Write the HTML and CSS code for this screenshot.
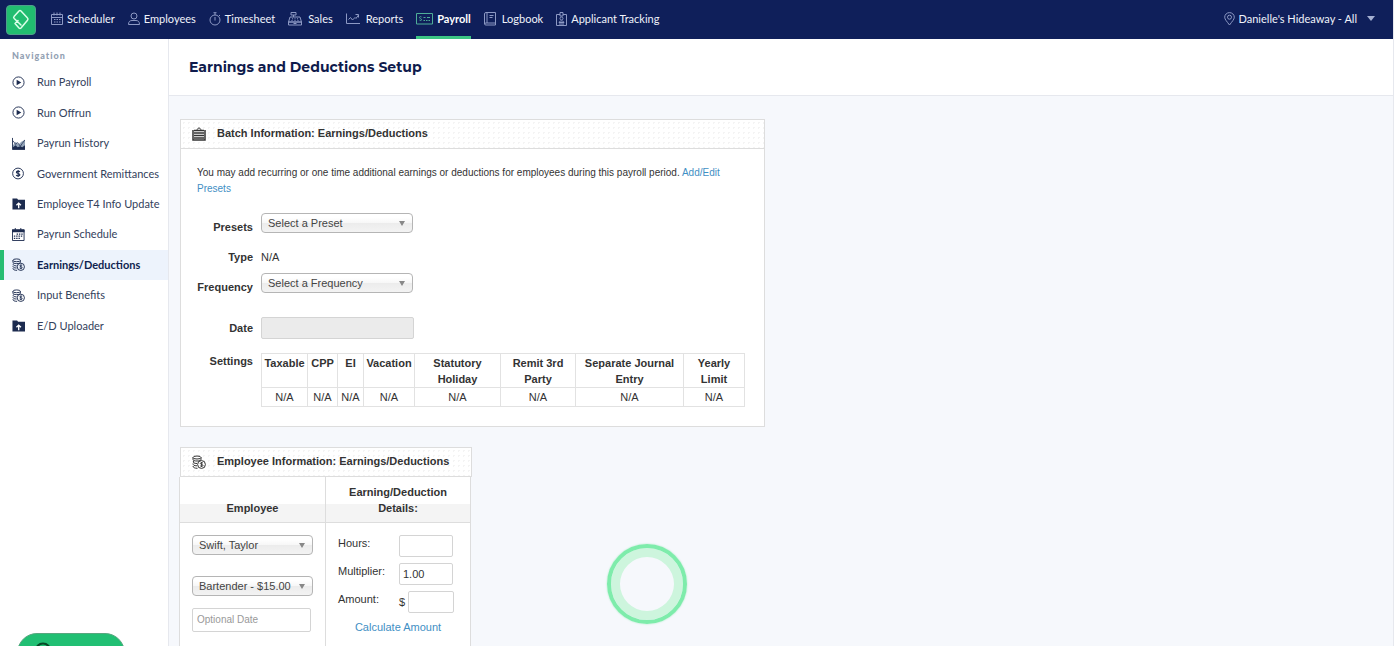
FILE: index.html
```html
<!doctype html>
<html lang="en">

<head>
    <meta charset="utf-8">
    <title>Earnings and Deductions Setup</title>
    <link rel="stylesheet" href="styles.css">
</head>

<body>
    <!-- shared icons -->
    <svg class="defs" width="0" height="0">
        <symbol id="play" viewBox="0 0 14 14">
            <circle cx="7" cy="7" r="6" fill="none" stroke="currentColor"/>
            <path d="M5 4l5 3-5 3z" fill="currentColor"/>
        </symbol>
        <symbol id="coins" viewBox="0 0 14 14">
            <g fill="none" stroke="currentColor">
                <ellipse cx="5" cy="2.500" rx="4" ry="1.500"/>
                <path d="M1 2.500v2c0 1 1.500 1.500 4 1.500s4-.5 4-1.500v-2M1.500 6c-.8 1.500.5 2.500 3.500 2.500M1 8.500c0 1.500 1 2.300 4 2.300M1 11c0 1.500 1.500 2.300 4.500 2.300"/>
                <circle cx="9.500" cy="9.500" r="3.900"/>
                <path d="M11 8.200c-.5-.8-2.700-.8-2.700.3s2.700.7 2.700 1.900-2.300 1.200-2.900.3M9.600 7v5" stroke-width=".9"/>
            </g>
        </symbol>
        <symbol id="folder" viewBox="0 0 14 14">
            <path d="M.5 1.500h5l1 1.500H14v10.500H.5z" fill="currentColor"/>
            <path d="M7.200 12V7.500M4.800 9l2.400-2.400L9.600 9" fill="none" stroke="#fff" stroke-width="1.500"/>
        </symbol>
    </svg>

    <header class="topbar">
        <a href="#" class="logo" aria-label="Home">
            <svg width="30" height="30" viewBox="0 0 30 30" fill="none" stroke-width="1.500" stroke-linejoin="round" stroke-linecap="round">
                <path d="M8 11.500l5-5.500q1-1 2 0l6.500 7q1 1 0 2.200l-6.500 7.800q-1 1-2 0l-4-4.500 3-3M8 11.500q-.8 1 .2 2l6.800 6.500"/>
            </svg>
        </a>
        <nav class="menu">
            <a href="#"><svg width="12" height="14" viewBox="0 0 12 14"><path d="M.5 2.500h11v10H.5zM.5 5.500h11M3 .5v3M6 .5v3M9 .5v3M3 7.500h1.500M5.500 7.500H7M8 7.500h1.500M3 10h1.500M5.500 10H7M8 10h1.500"/></svg>Scheduler</a>
            <a href="#"><svg width="12" height="14" viewBox="0 0 12 14"><circle cx="6" cy="4" r="3"/><path d="M.5 12.500c0-3 1.500-4 3.500-4h4c2 0 3.500 1 3.500 4z"/></svg>Employees</a>
            <a href="#"><svg width="12" height="14" viewBox="0 0 12 14"><circle cx="6" cy="8" r="5"/><path d="M4.500.7h3M6 1v2M6 5v3.500M10 3l1 1"/></svg>Timesheet</a>
            <a href="#" class="wide"><svg width="14" height="14" viewBox="0 0 14 14"><path d="M3 .5h5v2.500H3zM5.500 3v2M2 5h10l1.500 5H.5zM.5 10h13v3H.5zM4 6.800h1M6.500 6.800h1M9 6.800h1M3.500 8.500h1M6.500 8.500h1M9.500 8.500h1M5.500 11.500h3"/></svg>Sales</a>
            <a href="#" class="wide"><svg width="14" height="14" viewBox="0 0 14 14"><path d="M.5 1.500v10H14M2.500 7.500l2-2 2 2.500L9 5.500l1 1 2.500-3.500M9.500 2.500h3V5.500"/></svg>Reports</a>
            <a href="#" class="current"><svg width="17" height="14" viewBox="0 0 17 14"><path d="M.5 1.500h16v10.500H.5zM5.500 5c-1-.7-2-.3-2 .5 0 1.200 2 1 2 2.200 0 1-1.300 1-2 .4M7.500 5.500h2M11 5.500h3M7.500 8.500h1.500M10 8.500h1.500M12.500 8.500h1.500"/></svg>Payroll</a>
            <a href="#" class="wide"><svg width="12" height="14" viewBox="0 0 12 14"><path d="M2 .5h9.500v10.500H2q-1.500 0-1.500 1t1.500 1h9.500v-2M.5 12V2q0-1.500 1.500-1.500M3 .5V11M5.500 3.500H9.500M5.500 5.500h3"/></svg>Logbook</a>
            <a href="#"><svg width="11" height="14" viewBox="0 0 11 14"><path d="M4 2.500H.5v11h10v-11H7M4 .5h3v3.500H4z"/><circle cx="5.500" cy="6.500" r="1.500"/><path d="M3 10.500c0-2 5-2 5 0zM3 12h5"/></svg>Applicant Tracking</a>
        </nav>
        <button type="button" class="location">
            <svg width="11" height="14" viewBox="0 0 11 14"><path d="M5.500 13C3 9.500.7 7.500.7 5.200a4.800 4.600 0 0 1 9.600 0C10.300 7.500 8 9.500 5.500 13z"/><circle cx="5.500" cy="5.200" r="2"/></svg>
            Danielle's Hideaway - All
            <span class="caret"></span>
        </button>
    </header>

    <div class="layout">
        <aside class="sidebar">
            <div class="heading">Navigation</div>
            <nav class="links">
                <a href="#"><svg><use href="#play"/></svg>Run Payroll</a>
                <a href="#"><svg><use href="#play"/></svg>Run Offrun</a>
                <a href="#"><svg viewBox="0 0 14 14"><path d="M1 9l3-4 3 3 3-3 4-2v10H1z" fill="#93a4b8"/><path d="M.5 1v12.500H14" fill="none" stroke="currentColor"/><path d="M1 4l3 4 2-2 3 4 2-3 3-4" fill="none" stroke="currentColor" stroke-width=".8"/><path d="M1 13v-2l3-2 2 2 3-1 2 1 3-2v4z" fill="currentColor"/></svg>Payrun History</a>
                <a href="#"><svg viewBox="0 0 14 14"><circle cx="6.500" cy="7" r="5.800" fill="none" stroke="currentColor"/><path d="M8.500 5.300c-.7-1.200-3.800-1.200-3.800.4s3.800 1 3.800 2.700-3.200 1.600-4 .3M6.600 3.300v7.400" fill="none" stroke="currentColor" stroke-width="1.200"/></svg>Government Remittances</a>
                <a href="#"><svg><use href="#folder"/></svg>Employee T4 Info Update</a>
                <a href="#"><svg viewBox="0 0 14 14"><path d="M.5 2h12.500v11.500H.5z" fill="none" stroke="currentColor"/><path d="M0 1.500h13.500V4.500H0zM3 0h1v2H3zM9 0h1v2H9z" fill="currentColor"/><path d="M5 6.500h6.500M2 8.800h9.500M2 11.200h7" fill="none" stroke="currentColor" stroke-width="1.400" stroke-dasharray="1.500 1"/></svg>Payrun Schedule</a>
                <a href="#" class="current"><svg><use href="#coins"/></svg>Earnings/Deductions</a>
                <a href="#"><svg><use href="#coins"/></svg>Input Benefits</a>
                <a href="#"><svg><use href="#folder"/></svg>E/D Uploader</a>
            </nav>
        </aside>

        <main class="main">
            <h1>Earnings and Deductions Setup</h1>

            <section class="panel batch">
                <h2>
                    <svg viewBox="0 0 14 14"><path d="M1 3v10h12V3" fill="none" stroke="currentColor" stroke-width="1.500"/><path d="M2 3.500h10M2 6h10M2 8.500h10M2 11h10" stroke="currentColor" stroke-width="1.500"/><path d="M4.500 3L7 .7 9.500 3" fill="none" stroke="currentColor"/></svg>
                    <span>Batch Information: Earnings/Deductions</span>
                </h2>
                <form class="body">
                    <p>You may add recurring or one time additional earnings or deductions for employees during this payroll period. <a href="#">Add/Edit Presets</a></p>
                    <div class="row">
                        <label for="preset">Presets</label>
                        <div class="select">
                            <select id="preset"><option>Select a Preset</option></select>
                        </div>
                    </div>
                    <div class="row">
                        <span class="label">Type</span>
                        <span class="value">N/A</span>
                    </div>
                    <div class="row tall">
                        <label for="frequency">Frequency</label>
                        <div class="select">
                            <select id="frequency"><option>Select a Frequency</option></select>
                        </div>
                    </div>
                    <div class="row date">
                        <label for="date">Date</label>
                        <input type="text" id="date" disabled="disabled">
                    </div>
                    <div class="row settings">
                        <span class="label">Settings</span>
                        <table>
                            <thead>
                                <tr>
                                    <th class="taxable">Taxable</th>
                                    <th class="cpp">CPP</th>
                                    <th class="ei">EI</th>
                                    <th class="vacation">Vacation</th>
                                    <th class="holiday">Statutory Holiday</th>
                                    <th class="remit">Remit 3rd Party</th>
                                    <th class="journal">Separate Journal Entry</th>
                                    <th>Yearly Limit</th>
                                </tr>
                            </thead>
                            <tbody>
                                <tr>
                                    <td>N/A</td>
                                    <td>N/A</td>
                                    <td>N/A</td>
                                    <td>N/A</td>
                                    <td>N/A</td>
                                    <td>N/A</td>
                                    <td>N/A</td>
                                    <td>N/A</td>
                                </tr>
                            </tbody>
                        </table>
                    </div>
                </form>
            </section>

            <section class="panel employee">
                <h2>
                    <svg><use href="#coins"/></svg>
                    <span>Employee Information: Earnings/Deductions</span>
                </h2>
                <table>
                    <thead>
                        <tr>
                            <th class="name">Employee</th>
                            <th>Earning/Deduction Details:</th>
                        </tr>
                    </thead>
                    <tbody>
                        <tr>
                            <td>
                                <div class="who">
                                    <div class="select">
                                        <select aria-label="Employee"><option>Swift, Taylor</option></select>
                                    </div>
                                    <div class="select">
                                        <select aria-label="Position"><option>Bartender - $15.00</option></select>
                                    </div>
                                    <input type="text" placeholder="Optional Date" aria-label="Optional Date">
                                </div>
                            </td>
                            <td>
                                <div class="details">
                                    <div class="line">
                                        <label for="hours">Hours:</label>
                                        <input type="text" id="hours">
                                    </div>
                                    <div class="line">
                                        <label for="multiplier">Multiplier:</label>
                                        <input type="text" id="multiplier" value="1.00">
                                    </div>
                                    <div class="line amount">
                                        <label for="amount">Amount:</label>
                                        <span>$</span>
                                        <input type="text" id="amount">
                                    </div>
                                    <a href="#">Calculate Amount</a>
                                </div>
                            </td>
                        </tr>
                    </tbody>
                </table>
            </section>
        </main>
    </div>

    <div class="spinner" role="status" aria-label="Loading"></div>
    <button type="button" class="help" aria-label="Help">
        <svg width="18" height="18" viewBox="0 0 18 18"><circle cx="9" cy="9" r="7.500" fill="none" stroke="#064a26" stroke-width="2"/></svg>
    </button>
</body>

</html>
```
FILE: styles.css
```css
* {
    box-sizing: border-box;
}

body {
    margin: 0;
    height: 100vh;
    overflow: hidden;
    display: flex;
    flex-direction: column;
    border-right: 1px solid #e6e8ee;
    font-family: "Liberation Sans", Arial, sans-serif;
    font-size: 11px;
    line-height: 16px;
    color: #333333;
    background: #f6f8fc;
}

a {
    color: #3f8fc4;
    text-decoration: none;
}

input,
select,
button {
    font: inherit;
    color: inherit;
}

.defs {
    position: absolute;
}

/* top bar */

.topbar {
    flex: none;
    display: flex;
    align-items: center;
    height: 39px;
    padding: 0 18px 0 6px;
    background: #0f1f5a;
    font-family: Lato, sans-serif;
    color: #f0f3fb;
}

.topbar svg {
    fill: none;
    stroke: #8d99c4;
}

.logo {
    width: 30px;
    height: 30px;
    border-radius: 4px;
    background: #21bd70;
    border: 1px solid #4f9f8b;
    margin-right: 15px;
}

.topbar .logo svg {
    display: block;
    margin: -1px;
    stroke: #dcffe9;
}

.menu {
    display: flex;
    align-self: stretch;
    gap: 13px;
    flex: 1;
}

.menu a {
    display: flex;
    align-items: center;
    gap: 4px;
    color: inherit;
    white-space: nowrap;
    border-bottom: 3px solid transparent;
    border-top: 1px solid transparent;
}

.menu a.wide {
    gap: 6px;
}

.menu a.current {
    font-weight: 700;
    color: #ffffff;
    border-bottom-color: #3cc684;
}

.menu a.current svg {
    stroke: #4eae98;
}

.location {
    display: flex;
    align-items: center;
    gap: 4px;
    padding: 0 0 2px;
    border: none;
    background: none;
    cursor: pointer;
}

.caret {
    margin-left: 6px;
    border: 4px solid transparent;
    border-top: 5px solid #a5b0d2;
    border-bottom: none;
}

.layout {
    flex: 1;
    display: flex;
    min-height: 0;
}

/* sidebar */

.sidebar {
    flex: none;
    width: 169px;
    border-right: 1px solid #e6e8ee;
    background: #ffffff;
    font-family: Lato, sans-serif;
}

.heading {
    padding: 9px 12px 3px;
    font-size: 9px;
    font-weight: 900;
    letter-spacing: 1px;
    color: #93a1b3;
}

.links {
    display: grid;
    grid-auto-rows: 1fr;
    height: 274px;
}

.links a {
    display: flex;
    align-items: center;
    gap: 12px;
    padding-left: 8px;
    border-left: 4px solid transparent;
    color: #33415c;
    white-space: nowrap;
}

.links svg {
    width: 13px;
    height: 13px;
    color: #1c2b4f;
}

.links a.current {
    font-weight: 700;
    color: #0f1f4f;
    background: #edf3fc;
    border-left-color: #27bd72;
}

/* content */

.main {
    flex: 1;
    min-width: 0;
}

h1 {
    margin: 0;
    height: 57px;
    padding: 0 20px;
    border-bottom: 1px solid #e6e8ee;
    background: #ffffff;
    font-family: Montserrat, Inter, sans-serif;
    font-size: 14px;
    font-weight: 700;
    line-height: 56px;
    color: #0f1b4c;
}

.panel {
    margin-left: 11px;
}

.panel h2 {
    display: flex;
    align-items: center;
    gap: 11px;
    margin: 0;
    height: 29px;
    padding: 0 11px;
    border-bottom: 1px solid #dddddd;
    background: #ffffff radial-gradient(#f4f4f4 1px, transparent 1px) 0 0 / 5px 5px;
    font-size: 11px;
    font-weight: 700;
}

.panel h2 svg {
    width: 14px;
    height: 14px;
}

.panel h2 span {
    padding-bottom: 2px;
}

.batch {
    max-width: 585px;
    margin-top: 23px;
    border: 1px solid #dddddd;
    background: #ffffff;
}

.body {
    padding: 16px 16px 19px;
}

.body p {
    margin: 0 0 16px;
    font-size: 10px;
}

.row {
    display: flex;
    align-items: flex-start;
    gap: 8px;
    height: 30px;
}

.row.tall {
    height: 44px;
}

.row.date {
    height: 36px;
}

.row.settings {
    height: auto;
}

.row label,
.row .label {
    flex: none;
    width: 56px;
    padding-top: 6px;
    text-align: right;
    font-weight: 700;
}

.value {
    padding-top: 6px;
}

.row.date label {
    padding-top: 3px;
}

.row.settings .label {
    padding-top: 0;
}

.select {
    position: relative;
    width: 152px;
}

.select::after {
    content: "";
    position: absolute;
    right: 8px;
    top: 8px;
    border: 3px solid transparent;
    border-top: 5px solid #888888;
    border-bottom: none;
    pointer-events: none;
}

select {
    display: block;
    appearance: none;
    width: 100%;
    height: 20px;
    padding: 0 16px 0 6px;
    border: 1px solid #b5b5b5;
    border-radius: 4px;
    background: linear-gradient(#ffffff 20%, #f7f7f7 50%, #ececec 52%, #f3f3f3 100%);
    color: #444444;
    line-height: 18px;
}

input {
    width: 54px;
    height: 22px;
    padding: 0 3px;
    border: 1px solid #d4d4d4;
    border-radius: 2px;
    background: #ffffff;
}

.date input {
    width: 153px;
    background: #ebebeb;
}

::placeholder {
    color: #999999;
}

table {
    border-collapse: collapse;
    table-layout: fixed;
}

.settings table {
    width: 100%;
    max-width: 484px;
}

.settings th,
.settings td {
    height: 19px;
    padding: 1px 0;
    border: 1px solid #e2e2e2;
    text-align: center;
    vertical-align: top;
}

.settings th {
    padding: 1px 8px 0;
}

.settings th.taxable {
    width: 46px;
    padding: 1px 0 0;
}

.settings th.cpp {
    width: 30px;
    padding: 1px 0 0;
}

.settings th.ei {
    width: 26px;
    padding: 1px 0 0;
}

.settings th.vacation {
    width: 51px;
    padding: 1px 0 0;
}

.holiday {
    width: 86px;
}

.remit {
    width: 75px;
}

.journal {
    width: 108px;
}

.employee {
    width: 292px;
    margin-top: 20px;
}

.employee h2 {
    height: 30px;
    border: 1px solid #dddddd;
}

.employee table {
    width: 292px;
    margin-left: -1px;
    background: #ffffff;
}

.employee th {
    height: 45px;
    padding: 6px 20px;
    border: 1px solid #dddddd;
    border-top: none;
    background: linear-gradient(#ffffff 60%, #f4f4f4 60%);
    vertical-align: bottom;
}

.employee th.name {
    width: 146px;
}

.employee td {
    padding: 12px;
    border: 1px solid #dddddd;
    vertical-align: top;
}

.who {
    display: flex;
    flex-direction: column;
}

.who .select {
    width: 121px;
    margin-bottom: 21px;
}

.who .select + .select {
    margin-bottom: 12px;
}

.who input {
    width: 119px;
    height: 24px;
    padding: 0 4px;
    font-size: 10px;
}

.details {
    text-align: center;
}

.line {
    display: flex;
    align-items: flex-start;
    height: 28px;
}

.line label {
    width: 61px;
    text-align: left;
}

.line span {
    width: 9px;
    padding-top: 3px;
    text-align: left;
}

.line.amount input {
    width: 46px;
}

/* overlays */

.spinner {
    position: fixed;
    left: 607px;
    top: 544px;
    width: 80px;
    height: 80px;
    border-radius: 50%;
    border: 4px solid #7eecab;
    box-shadow: inset 0 0 0 9px #cdf5dd, 0 0 2px #a5e8c0;
}

.help {
    position: fixed;
    left: 17px;
    top: 633px;
    width: 108px;
    height: 40px;
    padding: 8px 16px;
    border: 1px solid #58a67f;
    border-radius: 20px;
    background: #21bf73;
    text-align: left;
}
```
